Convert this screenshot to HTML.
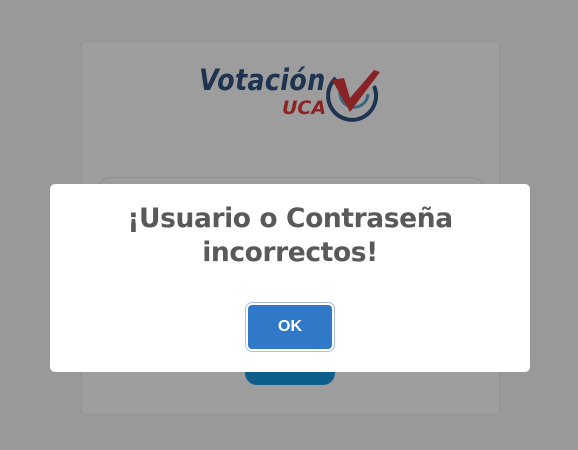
<!DOCTYPE html>
<html><head><style>
html,body{margin:0;width:578px;height:450px;overflow:hidden;background:#999;font-family:"Liberation Sans",sans-serif}
.card{position:absolute;left:82px;top:42px;width:417px;height:372px;background:#9d9d9d;border-radius:4px;box-shadow:0 0 3px rgba(0,0,0,.08)}
.inp{position:absolute;left:97px;top:177px;width:386px;height:30px;border:1px solid #8e8e8e;border-radius:14px}
.ing{position:absolute;left:245px;top:355px;width:90px;height:30px;background:#0e5e8c;border-radius:12px}
.modal{position:absolute;left:50px;top:184px;width:480px;height:188px;background:#fff;border-radius:5px}
.t{position:absolute;left:0;width:480px;top:18px;text-align:center;font-weight:bold;font-size:26.5px;line-height:34px;color:#595959;font-family:"DejaVu Sans","Liberation Sans",sans-serif;letter-spacing:-0.4px}
.ok{position:absolute;left:198px;top:121px;width:84px;height:44px;background:#3078c8;border-radius:4px;box-shadow:0 0 0 2px #fff,0 0 0 3px #a9c3e2;color:#fff;font-size:16px;font-weight:bold;text-align:center;line-height:44px}
.v{position:absolute;left:199px;top:63px;font-size:29px;font-weight:bold;font-style:italic;color:#1d3350;letter-spacing:0.3px;font-family:"DejaVu Sans",sans-serif;transform:scaleX(0.88);transform-origin:left}
.u{position:absolute;left:282px;top:97px;font-size:19px;font-weight:bold;font-style:italic;color:#8a2326;font-family:"DejaVu Sans",sans-serif}
</style></head><body>
<div class="card"></div>
<div class="v">Votación</div>
<div class="u">UCA</div>
<svg style="position:absolute;left:322px;top:64px" width="60" height="60" viewBox="0 0 60 60">
<path d="M14 14 A24 24 0 1 0 52 22" fill="none" stroke="#1d3350" stroke-width="4"/>
<path d="M20 22 A14 14 0 1 0 46 30" fill="none" stroke="#3c6580" stroke-width="3"/>
<path d="M10 16 L22 14 L28 34 L52 6 L58 8 L28 48 Z" fill="#8a2326"/>
</svg>
<div class="inp"></div>
<div class="ing"></div>
<div class="modal">
<div class="t">¡Usuario o Contraseña<br>incorrectos!</div>
<div class="ok">OK</div>
</div>
</body></html>
